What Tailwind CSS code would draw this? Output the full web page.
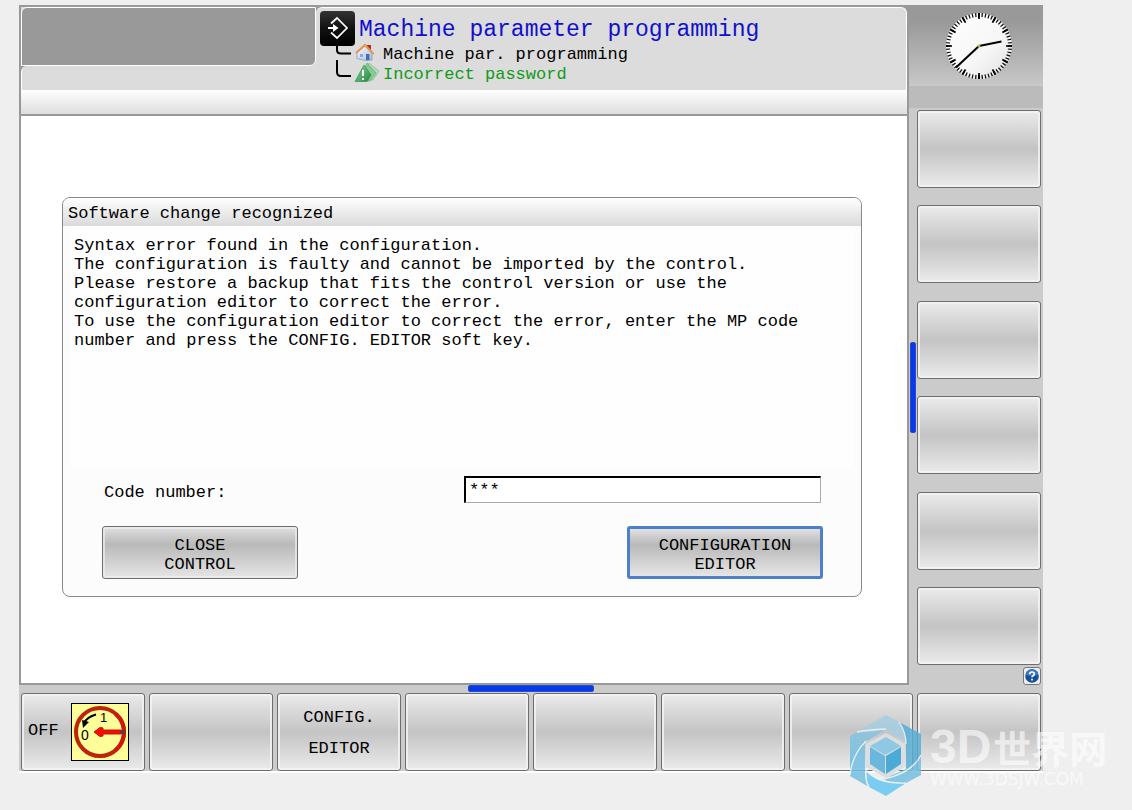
<!DOCTYPE html>
<html lang="en">
<head>
<meta charset="utf-8">
<meta name="viewport" content="width=device-width, initial-scale=1">
<title>Machine parameter programming</title>
<script src="https://cdn.jsdelivr.net/npm/@tailwindcss/browser@4"></script>
</head>
<body class="bg-[#efefef] text-black font-['Liberation_Mono',monospace] text-[17px] leading-[19px]">
<div class="relative min-h-screen flex flex-col pt-[5px] pl-[19px] pr-[89px] pb-[37px]">
  <div class="flex-1 flex flex-col bg-[#cbcbcb] border-b-2 border-white">
    <div class="flex-1 flex">

      <!-- Main window -->
      <main class="flex-1 flex flex-col border-2 border-[#999] bg-white">
        <header class="flex h-[83px] bg-[#999]">
          <div class="w-[295px] shrink-0 flex flex-col bg-[#999]">
            <div class="h-[59px] bg-[#dcdcdc]"><div class="h-full bg-[#999] border border-white rounded-tl-md rounded-br-md"></div></div>
            <div class="flex-1 bg-[#dcdcdc] border-l border-white rounded-tl-md"></div>
          </div>
          <div class="flex-1 bg-[#dcdcdc] border-t border-r border-white rounded-tl-md rounded-tr-md flex pl-1 pt-[3px]">
            <svg class="w-[64px] h-[78px] shrink-0 -mr-[1px]" viewBox="0 0 64 78" aria-hidden="true">
              <defs>
                <linearGradient id="blk" x1="0" y1="0" x2="0" y2="1"><stop offset="0" stop-color="#333"/><stop offset=".5" stop-color="#111"/><stop offset="1" stop-color="#000"/></linearGradient>
                <linearGradient id="grn" x1="0" y1="0" x2="1" y2="1"><stop offset="0" stop-color="#8fd6a0"/><stop offset="1" stop-color="#218a3e"/></linearGradient>
                <linearGradient id="wall" x1="0" y1="0" x2="1" y2="1"><stop offset="0" stop-color="#fff"/><stop offset="1" stop-color="#a9bfdf"/></linearGradient>
              </defs>
              <rect x="0" y="0" width="35" height="35" rx="4" fill="url(#blk)"/>
              <path d="M11 12.500 17 7 27 17 17 27 11 21.500" fill="none" stroke="#fff" stroke-width="1.700"/>
              <path d="M8 17h6" stroke="#fff" stroke-width="2"/><path d="M13 13l5.500 4-5.500 4z" fill="#fff"/>
              <path d="M17 35v4q0 3.500 4 3.500h10M17 49v12q0 4 4 4h10" fill="none" stroke="#000" stroke-width="2"/>
              <path d="M47 34h4v6h-4z" fill="#b52a1d"/>
              <path d="M37 41 45 34 52 41v8l-6 .500-9-2z" fill="url(#wall)" stroke="#7890b8" stroke-width=".7"/>
              <path d="M46 43h3.500v6H46z" fill="#4a6ea8"/><path d="M40 43h3v3h-3z" fill="#87a8d6"/>
              <path d="M36 42 45 34l8.500 9" fill="none" stroke="#e8934f" stroke-width="2.200" stroke-linejoin="round"/>
              <path d="M49 52 59 60 53 69H42z" fill="#b4dcba" stroke="#79b985" stroke-width=".6"/>
              <path d="M47 52 56 62 50 70H39z" fill="#86ca93" stroke="#5aa56b" stroke-width=".6"/>
              <path d="M44 54 51 64 47 70.500H35z" fill="url(#grn)" stroke="#2b854c" stroke-width=".6"/>
              <path d="M43 59v6M43 67v2" stroke="#fff" stroke-width="2"/>
            </svg>
            <div>
              <h1 class="text-[23px] leading-[24px] text-[#1010cc] -ml-6 pt-[7px]">Machine parameter programming</h1>
              <p class="leading-[20px] pt-[3px]">Machine par. programming</p>
              <p class="leading-[20px] text-[#109a18]">Incorrect password</p>
            </div>
          </div>
        </header>
        <div class="h-[26px] shrink-0 bg-linear-to-b from-white to-[#dedede] border-b-2 border-[#999]"></div>

        <section class="flex-1 flex flex-col mt-[81px] mb-[86px] ml-[41px] mr-[45px] border border-[#888] rounded-lg overflow-hidden bg-[#fcfcfc]" role="dialog" aria-labelledby="dlg">
          <h2 id="dlg" class="h-[28px] shrink-0 pl-[5px] pt-[6px] bg-linear-to-b from-white to-[#dadada]">Software change recognized</h2>
          <div class="flex-1 bg-[#fefefe] mx-2 pl-[3px] pt-[10px] whitespace-nowrap">
            <p>Syntax error found in the configuration.</p>
            <p>The configuration is faulty and cannot be imported by the control.</p>
            <p>Please restore a backup that fits the control version or use the<br>configuration editor to correct the error.</p>
            <p>To use the configuration editor to correct the error, enter the MP code<br>number and press the CONFIG. EDITOR soft key.</p>
          </div>
          <form class="pt-2 pl-[39px] pr-[38px] pb-[17px]">
            <div class="flex justify-between items-center pr-[2px]">
              <label for="code" class="pt-[6px] pl-[2px]">Code number:</label>
              <input id="code" type="text" value="***" class="w-[357px] h-[27px] bg-white border border-[#aaa] border-t-2 border-l-2 border-t-black border-l-black pl-[3px] outline-none">
            </div>
            <div class="flex justify-between pt-[23px]">
              <button type="button" class="w-[196px] h-[53px] border border-[#6e6e6e] rounded-[3px] inset-ring-2 inset-ring-[#eee]/70 bg-linear-to-b from-[#e0e0e0] from-0% via-[#b9b9b9] via-34% to-[#e6e6e6] pt-1">CLOSE<br>CONTROL</button>
              <button type="button" class="w-[196px] h-[53px] border-[3px] border-[#4c80c8] rounded-[3px] bg-linear-to-b from-[#e0e0e0] from-0% via-[#b9b9b9] via-34% to-[#e6e6e6] pt-1">CONFIGURATION<br>EDITOR</button>
            </div>
          </form>
        </section>
      </main>

      <!-- Vertical soft keys -->
      <aside class="w-[134px] shrink-0 flex flex-col">
        <div class="h-[81px] bg-linear-to-b from-[#999] from-20% to-[#c8c8c8] flex justify-center pl-[6px] pt-[6px]">
          <svg class="w-[70px] h-[70px]" viewBox="0 0 70 70" role="img" aria-label="Clock">
            <defs><linearGradient id="face" x1="0" y1="0" x2="1" y2="1"><stop offset="0" stop-color="#fff"/><stop offset=".6" stop-color="#f6f6f6"/><stop offset="1" stop-color="#dedede"/></linearGradient></defs>
            <circle cx="35" cy="35" r="33" fill="url(#face)"/>
            <circle cx="35" cy="35" r="31" fill="none" stroke="#111" stroke-width="4" pathLength="600" stroke-dasharray="4 6" stroke-dashoffset="2"/>
            <circle cx="35" cy="35" r="30" fill="none" stroke="#000" stroke-width="6" pathLength="600" stroke-dasharray="6 44" stroke-dashoffset="3"/>
            <path d="M35 35 57.500 30.500M35 35 12 56.500" stroke="#000" stroke-width="2"/>
            <circle cx="35" cy="35" r="1.500" fill="#b9bd35"/>
          </svg>
        </div>
        <div class="h-[22px] bg-[#bbb]"></div>
        <div class="flex-1 flex pt-[2px] pr-[2px]">
          <div class="w-2 flex items-center px-px"><div class="w-full h-[91px] bg-[#0638f2] border border-[#2b50bb] rounded-xs"></div></div>
          <div class="flex-1 flex flex-col justify-between">
            <button type="button" aria-label="Vertical soft key 1" class="h-[78px] border border-[#6e6e6e] rounded-[3px] inset-ring-2 inset-ring-[#f4f4f4]/80 bg-linear-to-b from-[#ebebeb] via-[#c4c4c4] to-[#ebebeb]"></button>
            <button type="button" aria-label="Vertical soft key 2" class="h-[78px] border border-[#6e6e6e] rounded-[3px] inset-ring-2 inset-ring-[#f4f4f4]/80 bg-linear-to-b from-[#ebebeb] via-[#c4c4c4] to-[#ebebeb]"></button>
            <button type="button" aria-label="Vertical soft key 3" class="h-[78px] border border-[#6e6e6e] rounded-[3px] inset-ring-2 inset-ring-[#f4f4f4]/80 bg-linear-to-b from-[#ebebeb] via-[#c4c4c4] to-[#ebebeb]"></button>
            <button type="button" aria-label="Vertical soft key 4" class="h-[78px] border border-[#6e6e6e] rounded-[3px] inset-ring-2 inset-ring-[#f4f4f4]/80 bg-linear-to-b from-[#ebebeb] via-[#c4c4c4] to-[#ebebeb]"></button>
            <button type="button" aria-label="Vertical soft key 5" class="h-[78px] border border-[#6e6e6e] rounded-[3px] inset-ring-2 inset-ring-[#f4f4f4]/80 bg-linear-to-b from-[#ebebeb] via-[#c4c4c4] to-[#ebebeb]"></button>
            <button type="button" aria-label="Vertical soft key 6" class="h-[78px] border border-[#6e6e6e] rounded-[3px] inset-ring-2 inset-ring-[#f4f4f4]/80 bg-linear-to-b from-[#ebebeb] via-[#c4c4c4] to-[#ebebeb]"></button>
          </div>
        </div>
        <div class="flex justify-end pt-[2px] pr-[2px]">
          <button type="button" aria-label="Help" class="w-[18px] h-[18px] border border-[#777] rounded-[3px] bg-[#eee]">
            <svg class="w-4 h-4" viewBox="0 0 16 16"><circle cx="8" cy="8" r="6.800" fill="#174f9c"/><path d="M2 7a6 6 0 0 1 12 0q-6 2-12 0" fill="#3b78c0"/><path d="M5.700 6.200q0-2.200 2.300-2.200t2.300 1.900q0 1.200-1.300 1.800-1 .500-1 1.600M8 10.700v1.800" fill="none" stroke="#fff" stroke-width="1.700"/></svg>
          </button>
        </div>
      </aside>
    </div>

    <div class="h-2 flex justify-center pb-px"><div class="w-[126px] bg-[#0638f2] border border-[#2b50bb] rounded-xs"></div></div>

    <!-- Horizontal soft keys -->
    <nav class="grid grid-cols-8 gap-1 px-[2px]" aria-label="Soft keys">
      <button type="button" class="h-[78px] flex items-center justify-between pl-[6px] pr-[15px] border border-[#6e6e6e] rounded-[3px] inset-ring-2 inset-ring-[#f4f4f4]/80 bg-linear-to-b from-[#ebebeb] via-[#c4c4c4] to-[#ebebeb]">
        <span class="pb-[3px]">OFF</span>
        <svg class="w-[58px] h-[58px]" viewBox="0 0 58 58" aria-hidden="true">
          <rect x=".5" y=".5" width="57" height="57" fill="#ffff99" stroke="#000"/>
          <circle cx="29" cy="29" r="24" fill="none" stroke="#bd2410" stroke-width="4"/>
          <path d="M44.500 10.700A24 24 0 0 1 44.500 47.300" fill="none" stroke="#d01808" stroke-width="4"/>
          <path d="M23 29 29 24.500 32 25v2h18v4H32v2l-3 .500z" fill="#f40c05" stroke="#c41408"/>
          <path d="M49 27h5v4h-5z" fill="#713044"/>
          <path d="M25 11.500Q16 14 13 20" fill="none" stroke="#000" stroke-width="2"/>
          <path d="M11 17 12 25 18 19z"/>
          <text x="29" y="19" font-family="Liberation Sans, sans-serif" font-size="13">1</text>
          <text x="10" y="37" font-family="Liberation Sans, sans-serif" font-size="14">0</text>
        </svg>
      </button>
      <button type="button" aria-label="Soft key 2" class="h-[78px] border border-[#6e6e6e] rounded-[3px] inset-ring-2 inset-ring-[#f4f4f4]/80 bg-linear-to-b from-[#ebebeb] via-[#c4c4c4] to-[#ebebeb]"></button>
      <button type="button" class="h-[78px] leading-[31px] pt-[2px] border border-[#6e6e6e] rounded-[3px] inset-ring-2 inset-ring-[#f4f4f4]/80 bg-linear-to-b from-[#ebebeb] via-[#c4c4c4] to-[#ebebeb]">CONFIG.<br>EDITOR</button>
      <button type="button" aria-label="Soft key 4" class="h-[78px] border border-[#6e6e6e] rounded-[3px] inset-ring-2 inset-ring-[#f4f4f4]/80 bg-linear-to-b from-[#ebebeb] via-[#c4c4c4] to-[#ebebeb]"></button>
      <button type="button" aria-label="Soft key 5" class="h-[78px] border border-[#6e6e6e] rounded-[3px] inset-ring-2 inset-ring-[#f4f4f4]/80 bg-linear-to-b from-[#ebebeb] via-[#c4c4c4] to-[#ebebeb]"></button>
      <button type="button" aria-label="Soft key 6" class="h-[78px] border border-[#6e6e6e] rounded-[3px] inset-ring-2 inset-ring-[#f4f4f4]/80 bg-linear-to-b from-[#ebebeb] via-[#c4c4c4] to-[#ebebeb]"></button>
      <button type="button" aria-label="Soft key 7" class="h-[78px] border border-[#6e6e6e] rounded-[3px] inset-ring-2 inset-ring-[#f4f4f4]/80 bg-linear-to-b from-[#ebebeb] via-[#c4c4c4] to-[#ebebeb]"></button>
      <button type="button" aria-label="Soft key 8" class="h-[78px] border border-[#6e6e6e] rounded-[3px] inset-ring-2 inset-ring-[#f4f4f4]/80 bg-linear-to-b from-[#ebebeb] via-[#c4c4c4] to-[#ebebeb]"></button>
    </nav>
  </div>

  <!-- Site watermark -->
  <div class="absolute right-[25px] bottom-[13px] flex gap-2 pointer-events-none">
    <svg class="w-[73px] h-[83px]" viewBox="0 0 73 83" aria-hidden="true">
      <defs>
        <linearGradient id="lb" x1="0" y1="0" x2="0" y2="1"><stop offset="0" stop-color="#8cc4de"/><stop offset="1" stop-color="#5cbbe8"/></linearGradient>
      </defs>
      <g opacity=".85">
        <path d="M8 18 37 1 50 8Q55 15 57 28L37 16 20 24Q14 19 8 18z" fill="#a5cfe2"/>
        <path d="M50 8 72 20V42Q68 51 57 56V28Q56 17 50 8z" fill="#58aed6"/>
        <path d="M1 22 8 18Q17 19 36 16L16 28Q3 41 1 61z" fill="url(#lb)"/>
        <path d="M16 28V56Q16 67 20 73L1 62Q3 41 16 28z" fill="#74c0e3"/>
        <path d="M17 56Q28 70 57 69L37 82 20 73Q17 66 17 56z" fill="#66c6f2"/>
        <path d="M72 42V61L57 69Q42 70 34 65L57 55Q67 52 72 42z" fill="#74bfe2"/>
        <path d="M8 18Q17 16 37 15M1 61Q3 41 17 27M17 56Q16 67 20 73M17 56Q28 70 57 69M34 65Q62 60 72 41M50 8Q57 18 57 30" fill="none" stroke="#eef4f6" stroke-width="1.300"/>
      </g>
      <path d="M37 19 56 30V53L37 64 17 53V30z" fill="#dcdfe1"/>
      <path d="M21 32 37 23 52 32 36 41z" fill="#8ec8e2"/>
      <path d="M21 33 36 42V60L21 50z" fill="#69b7dc"/>
      <path d="M37 42 52 33V50L37 60z" fill="#4baad8"/>
    </svg>
    <div class="text-white/60 whitespace-nowrap pt-[13px] w-[177px]">
      <div class="flex items-center gap-[2px] h-10 font-bold"><span class="font-['Liberation_Sans',sans-serif] text-[48px] leading-10">3D</span><span class="font-['Noto_Sans_CJK_SC',sans-serif] text-[38px] leading-10">世界网</span></div>
      <div class="font-['DejaVu_Sans',sans-serif] text-[17px] leading-4 pt-1">WWW.3DSJW.COM</div>
    </div>
  </div>
</div>
</body>
</html>
